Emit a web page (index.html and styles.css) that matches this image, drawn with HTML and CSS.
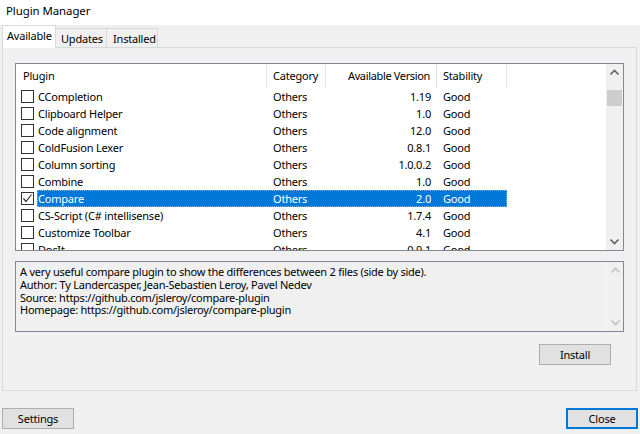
FILE: index.html
```html
<!DOCTYPE html>
<html>
<head>
<meta charset="utf-8">
<title>Plugin Manager</title>
<link rel="stylesheet" href="styles.css">
</head>
<body>
<div class="window">
  <div class="titlebar">Plugin Manager</div>
  <div class="tabs">
    <div class="tab tab-sel">Available</div>
    <div class="tab">Updates</div>
    <div class="tab">Installed</div>
  </div>
  <div class="panel">
    <div class="list">
      <div class="list-main">
        <div class="hdr">
          <div class="h h1">Plugin</div>
          <div class="h h2">Category</div>
          <div class="h h3">Available Version</div>
          <div class="h h4">Stability</div>
        </div>
        <div class="rows">
          <div class="row"><span class="cb"></span><div class="cells"><span class="c c1">CCompletion</span><span class="c c2">Others</span><span class="c c3">1.19</span><span class="c c4">Good</span></div></div>
          <div class="row"><span class="cb"></span><div class="cells"><span class="c c1">Clipboard Helper</span><span class="c c2">Others</span><span class="c c3">1.0</span><span class="c c4">Good</span></div></div>
          <div class="row"><span class="cb"></span><div class="cells"><span class="c c1">Code alignment</span><span class="c c2">Others</span><span class="c c3">12.0</span><span class="c c4">Good</span></div></div>
          <div class="row"><span class="cb"></span><div class="cells"><span class="c c1">ColdFusion Lexer</span><span class="c c2">Others</span><span class="c c3">0.8.1</span><span class="c c4">Good</span></div></div>
          <div class="row"><span class="cb"></span><div class="cells"><span class="c c1">Column sorting</span><span class="c c2">Others</span><span class="c c3">1.0.0.2</span><span class="c c4">Good</span></div></div>
          <div class="row"><span class="cb"></span><div class="cells"><span class="c c1">Combine</span><span class="c c2">Others</span><span class="c c3">1.0</span><span class="c c4">Good</span></div></div>
          <div class="row"><span class="cb"><svg class="check" width="11" height="11" viewBox="0 0 11 11"><polyline points="1.5,5.5 4,8.5 9.5,1.5" fill="none" stroke="#333" stroke-width="1.2"/></svg></span><div class="cells cells-sel"><span class="c c1">Compare</span><span class="c c2">Others</span><span class="c c3">2.0</span><span class="c c4">Good</span></div></div>
          <div class="row"><span class="cb"></span><div class="cells"><span class="c c1">CS-Script (C# intellisense)</span><span class="c c2">Others</span><span class="c c3">1.7.4</span><span class="c c4">Good</span></div></div>
          <div class="row"><span class="cb"></span><div class="cells"><span class="c c1">Customize Toolbar</span><span class="c c2">Others</span><span class="c c3">4.1</span><span class="c c4">Good</span></div></div>
          <div class="row"><span class="cb"></span><div class="cells"><span class="c c1">DocIt</span><span class="c c2">Others</span><span class="c c3">0.9.1</span><span class="c c4">Good</span></div></div>
        </div>
      </div>
      <div class="vscroll">
        <div class="arrow"><svg width="17" height="17" viewBox="0 0 17 17"><polyline points="4.5,10.5 8.5,6.5 12.5,10.5" fill="none" stroke="#606060" stroke-width="1.6"/></svg></div>
        <div class="track"><div class="thumb"></div></div>
        <div class="arrow"><svg width="17" height="17" viewBox="0 0 17 17"><polyline points="4.5,6.5 8.5,10.5 12.5,6.5" fill="none" stroke="#606060" stroke-width="1.6"/></svg></div>
      </div>
    </div>
    <div class="desc">
      <div class="desc-text">A very useful compare plugin to show the differences between 2 files (side by side).<br>Author: Ty Landercasper, Jean-Sebastien Leroy, Pavel Nedev<br>Source: https://github.com/jsleroy/compare-plugin<br>Homepage: https://github.com/jsleroy/compare-plugin</div>
      <div class="vscroll vscroll-dis">
        <div class="arrow"><svg width="17" height="17" viewBox="0 0 17 17"><polyline points="4.5,10.5 8.5,6.5 12.5,10.5" fill="none" stroke="#c0c0c0" stroke-width="1.6"/></svg></div>
        <div class="track"></div>
        <div class="arrow"><svg width="17" height="17" viewBox="0 0 17 17"><polyline points="4.5,6.5 8.5,10.5 12.5,6.5" fill="none" stroke="#c0c0c0" stroke-width="1.6"/></svg></div>
      </div>
    </div>
    <div class="btnrow">
      <div class="btn">Install</div>
    </div>
  </div>
  <div class="footer">
    <div class="btn">Settings</div>
    <div class="btn btn-default">Close</div>
  </div>
</div>
</body>
</html>
```
FILE: styles.css
```css
* { box-sizing: border-box; }
html, body { margin: 0; padding: 0; }
body {
  width: 640px;
  height: 434px;
  overflow: hidden;
  background: #f0f0f0;
  font-family: "Noto Sans", "Open Sans", sans-serif;
  font-size: 11px;
  letter-spacing: -0.2px;
  color: #000;
}
.window { display: flex; flex-direction: column; height: 434px; }
.titlebar {
  height: 25px;
  background: #fff;
  padding-left: 6px;
  line-height: 22px;
  font-size: 11.4px;
  letter-spacing: -0.05px;
}
.tabs {
  display: flex;
  align-items: flex-end;
  height: 22px;
  padding-left: 2px;
}
.tab {
  height: 19px;
  border: 1px solid #d9d9d9;
  border-bottom: none;
  background: #f0f0f0;
  padding: 0 0 0 5px;
  line-height: 19px;
  margin-left: -1px;
}
.tab-sel {
  position: relative;
  z-index: 1;
  height: 23px;
  margin-bottom: -1px;
  margin-left: 0;
  background: #fff;
  padding: 0 0 0 4px;
  line-height: 20px;
  width: 54px;
}
.tab:nth-child(2) { width: 52px; }
.tab:nth-child(3) { width: 52px; padding-left: 6px; }
.panel {
  margin-left: 2px;
  width: 635px;
  height: 344px;
  border: 1px solid #d9d9d9;
  background: #f0f0f0;
  padding: 15px 12px 0 12px;
  display: flex;
  flex-direction: column;
}
.list {
  width: 609px;
  height: 188px;
  border: 1px solid #828790;
  background: #fff;
  display: flex;
}
.list-main { flex: 1; overflow: hidden; display: flex; flex-direction: column; }
.hdr { display: flex; height: 24px; flex: none; }
.h {
  border-right: 1px solid #e5e5e5;
  line-height: 24px;
  padding-left: 7px;
  white-space: nowrap;
}
.h1 { width: 251px; }
.h2 { width: 59px; padding-left: 6px; }
.h3 { width: 111px; text-align: right; padding-right: 6px; letter-spacing: -0.35px; }
.h4 { width: 70px; padding-left: 6px; }
.rows { flex: 1; overflow: hidden; }
.row { display: flex; align-items: center; height: 17px; padding-left: 5px; }
.cb {
  width: 13px;
  height: 13px;
  border: 1px solid #333;
  background: #fff;
  flex: none;
  margin-right: 3px;
  display: flex;
  align-items: center;
  justify-content: center;
}
.cells { display: flex; height: 17px; align-items: center; }
.cells-sel { background: #0078d7; color: #fff; outline: 1px dotted #7fb7e8; outline-offset: -1px; }
.c { white-space: nowrap; line-height: 17px; }
.c1 { width: 230px; padding-left: 1px; }
.c2 { width: 59px; padding-left: 6px; }
.c3 { width: 111px; text-align: right; padding-right: 6px; }
.c4 { width: 70px; padding-left: 6px; }
.vscroll {
  width: 17px;
  flex: none;
  background: #f0f0f0;
  display: flex;
  flex-direction: column;
}
.arrow { height: 17px; flex: none; }
.arrow svg { display: block; }
.track { flex: 1; padding-top: 9px; }
.thumb { height: 16px; margin: 0 1px; background: #cdcdcd; }
.desc {
  margin-top: 10px;
  width: 609px;
  height: 71px;
  border: 1px solid #828790;
  background: #f0f0f0;
  display: flex;
}
.desc-text {
  flex: 1;
  padding: 4px 0 0 4px;
  line-height: 12.8px;
  letter-spacing: -0.25px;
  white-space: nowrap;
  overflow: hidden;
}
.vscroll-dis { border-left: 1px solid #f8f8f8; }
.btnrow { display: flex; justify-content: flex-end; padding-right: 13px; margin-top: 12px; }
.btn {
  width: 72px;
  height: 21px;
  background: #e1e1e1;
  border: 1px solid #adadad;
  text-align: center;
  line-height: 19px;
}
.btn-default { border: 2px solid #0078d7; line-height: 17px; }
.footer {
  display: flex;
  justify-content: space-between;
  padding: 0 2px;
  margin-top: 17px;
}
```
